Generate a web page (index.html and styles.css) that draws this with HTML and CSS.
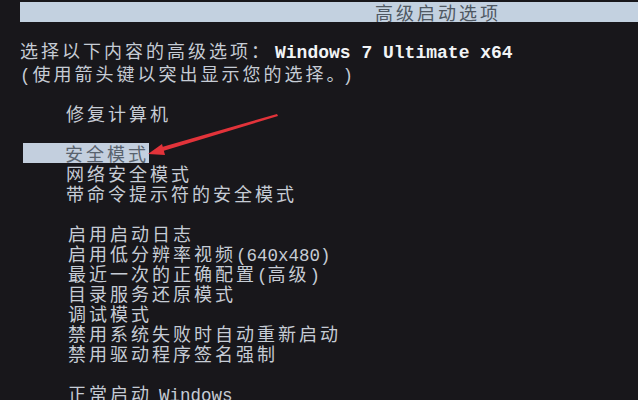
FILE: index.html
```html
<!DOCTYPE html>
<html lang="zh-CN">
<head>
  <meta charset="UTF-8">
  <meta name="viewport" content="width=device-width, initial-scale=1.0">
  <title>高级启动选项</title>
  <link rel="stylesheet" href="styles.css">
</head>
<body>
  <div class="screen">
    <div class="titlebar">高级启动选项</div>

    <div class="intro">
      <div class="line">选择以下内容的高级选项：<span class="en bright">Windows 7 Ultimate x64</span></div>
      <div class="line"><span class="en open">(</span>使用箭头键以突出显示您的选择。<span class="en close">)</span></div>
    </div>

    <div class="menu">
      <div class="item">修复计算机</div>
    </div>

    <div class="menu">
      <div class="item selected"><span class="bar">安全模式</span></div>
      <div class="item">网络安全模式</div>
      <div class="item">带命令提示符的安全模式</div>
    </div>

    <div class="menu lower">
      <div class="item">启用启动日志</div>
      <div class="item">启用低分辨率视频<span class="en">(640x480)</span></div>
      <div class="item">最近一次的正确配置<span class="en">(</span>高级<span class="en">)</span></div>
      <div class="item">目录服务还原模式</div>
      <div class="item">调试模式</div>
      <div class="item">禁用系统失败时自动重新启动</div>
      <div class="item">禁用驱动程序签名强制</div>
    </div>

    <div class="menu lower">
      <div class="item">正常启动 <span class="en">Windows</span></div>
    </div>

    <!-- red arrow drawn over the screen photo -->
    <svg class="arrow" width="638" height="400" viewBox="0 0 638 400">
      <polygon points="277,114 278,116 163,151 162,147" fill="#e2333a"/>
      <polygon points="148,154 162,144 165,155" fill="#e2333a"/>
    </svg>
  </div>
</body>
</html>
```

FILE: styles.css
```css
body {
  margin: 0;
  background-color: #18171b;
  font-family: "Noto Sans CJK SC", "Liberation Mono", monospace;
  color: #c6ccd5;
  overflow: hidden;
}
.screen {
  position: relative;
  height: 400px;
  padding-top: 2px;
  box-sizing: border-box;
}
.titlebar {
  margin-left: 20px;
  height: 20px;
  line-height: 20px;
  padding-left: 218px;
  text-align: center;
  background-color: #c3d1e0;
  color: #4f5862;
  font-size: 18px;
  letter-spacing: 3px;
}
.line,
.item {
  height: 20px;
  line-height: 20px;
  font-size: 18px;
  letter-spacing: 3px;
  white-space: nowrap;
}
.intro {
  margin-top: 18px;
  padding-left: 20px;
}
.intro .line + .line {
  margin-top: 3px;
}
.menu {
  margin-top: 20px;
  padding-left: 66px;
}
.menu.lower {
  padding-left: 68px;
}
.en {
  font-family: "Liberation Mono", monospace;
  font-size: 17.5px;
  letter-spacing: 0;
}
.en.open {
  margin-right: 2px;
}
.en.close {
  margin-left: 4px;
}
.bright {
  margin-left: 3px;
  color: #f2f4f6;
  font-weight: bold;
  font-size: 18px;
}
.item.selected {
  margin-left: -43px;
}
.bar {
  display: inline-block;
  height: 20px;
  padding-left: 42px;
  background-color: #c3cfde;
  color: #59636e;
}
.arrow {
  position: absolute;
  left: 0;
  top: 0;
}
```
